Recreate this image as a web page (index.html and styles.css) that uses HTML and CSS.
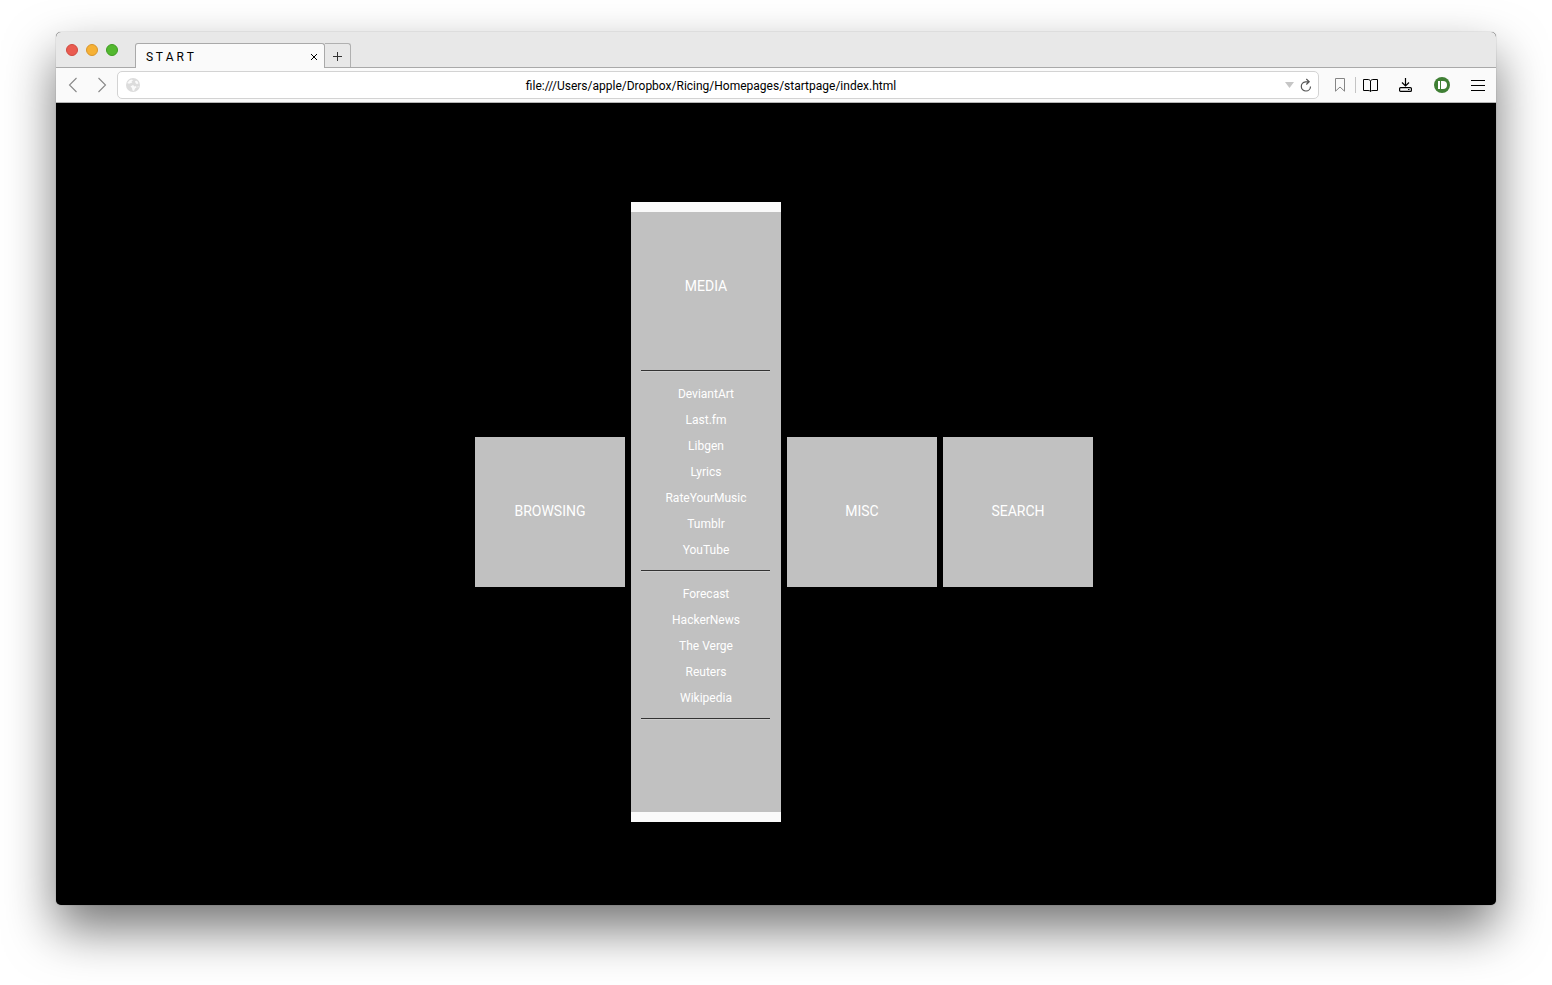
FILE: index.html
```html
<!DOCTYPE html>
<html lang="en">
<head>
<meta charset="utf-8">
<title>S T A R T</title>
<link rel="stylesheet" href="styles.css">
</head>
<body>
<div class="window">
  <header class="tabbar">
    <div class="lights">
      <button class="light red" aria-label="Close window"></button>
      <button class="light yellow" aria-label="Minimize window"></button>
      <button class="light green" aria-label="Zoom window"></button>
    </div>
    <div class="tab">
      <span>S T A R T</span>
      <button class="close" aria-label="Close tab"><svg width="8" height="8" viewBox="0 0 8 8"><path d="M1 1l6 6M7 1l-6 6" stroke="#000" stroke-width="1"/></svg></button>
    </div>
    <button class="newtab" aria-label="New tab"><svg width="9" height="9" viewBox="0 0 9 9"><path d="M4.500 0v9M0 4.500h9" stroke="#333"/></svg></button>
  </header>
  <nav class="toolbar">
    <div class="history">
      <button aria-label="Back"><svg width="10" height="16" viewBox="0 0 10 16" fill="none" stroke="#888" stroke-width="1.100"><path d="M8.500 1L1.500 8l7 7"/></svg></button>
      <button aria-label="Forward"><svg width="10" height="16" viewBox="0 0 10 16" fill="none" stroke="#888" stroke-width="1.100"><path d="M1.500 1l7 7-7 7"/></svg></button>
    </div>
    <div class="address">
      <svg width="14" height="14" viewBox="0 0 14 14"><circle cx="7" cy="7" r="7" fill="#dcdcdc"/><path d="M1.200 5L3.500 2.200 6 1.500l1 .8L5.500 3.500l.8 1-2 .8L3 5.800zM9 3l2-.2 1.500 2.400-1.500 1L9.500 5zM4.500 8.500L7 7l1.500 1.500 1.500-.5.500 1.500-1.500 1L8 13l-1.500-.5L6 10zM11.500 8.500l1.200-.5-.7 2z" fill="#fafafa"/></svg>
      <input class="url" type="text" aria-label="Address" value="file:///Users/apple/Dropbox/Ricing/Homepages/startpage/index.html">
      <button aria-label="Show history"><svg width="9" height="6" viewBox="0 0 9 6"><path d="M0 0h9L4.500 6z" fill="#c6c6c6"/></svg></button>
      <button class="reload" aria-label="Reload"><svg width="12" height="14" viewBox="0 0 12 14" fill="none" stroke="#555" stroke-width="1.200"><path d="M8.500 3.800H5.500a4.600 4.600 0 1 0 5 4.600M6.300 1l2.900 2.800-2.900 2.700"/></svg></button>
    </div>
    <div class="actions">
      <button class="bookmark" aria-label="Bookmark"><svg width="10" height="14" viewBox="0 0 10 14" fill="none" stroke="#858585"><path d="M.5.5h9v12.700L5 9 .5 13.200z"/></svg></button>
      <button class="reader" aria-label="Reader"><svg width="15" height="13" viewBox="0 0 15 13" fill="none" stroke="#000" stroke-width="1"><path d="M7.500 2C7 1 6 .5 5 .5H.5v11H5c1 0 2 .2 2.500 1 .5-.8 1.500-1 2.500-1h4.500V.5H10C9 .5 8 1 7.500 2zv10.500"/></svg></button>
      <button class="download" aria-label="Downloads"><svg width="13" height="14" viewBox="0 0 13 14" fill="none" stroke="#000" stroke-width="1.200"><path d="M6.500 0v7.500M3 4.500L6.500 8 10 4.500"/><rect x=".6" y="9.600" width="11.800" height="3.800" rx="1"/><path d="M9 11.500h1.500"/></svg></button>
      <button class="push" aria-label="Pushbullet"><svg width="16" height="16" viewBox="0 0 16 16"><circle cx="8" cy="8" r="8" fill="#3f7f34"/><path d="M4 4h2v8H4zM7 4h2a4 4 0 0 1 0 8H7z" fill="#fff"/></svg></button>
      <button class="menu" aria-label="Menu"><svg width="14" height="11" viewBox="0 0 14 11"><path d="M0 .5h14M0 5.500h14M0 10.500h14" stroke="#000"/></svg></button>
    </div>
  </nav>
  <main class="page">
    <section class="tile"><h2>BROWSING</h2></section>
    <section class="tile open">
      <h2>MEDIA</h2>
      <hr>
      <ul>
        <li><a href="#">DeviantArt</a></li>
        <li><a href="#">Last.fm</a></li>
        <li><a href="#">Libgen</a></li>
        <li><a href="#">Lyrics</a></li>
        <li><a href="#">RateYourMusic</a></li>
        <li><a href="#">Tumblr</a></li>
        <li><a href="#">YouTube</a></li>
      </ul>
      <hr>
      <ul>
        <li><a href="#">Forecast</a></li>
        <li><a href="#">HackerNews</a></li>
        <li><a href="#">The Verge</a></li>
        <li><a href="#">Reuters</a></li>
        <li><a href="#">Wikipedia</a></li>
      </ul>
      <hr>
    </section>
    <section class="tile"><h2>MISC</h2></section>
    <section class="tile"><h2>SEARCH</h2></section>
  </main>
</div>
</body>
</html>
```
FILE: styles.css
```css
* { box-sizing: border-box; }
body {
  margin: 0;
  min-height: 100vh;
  padding: 32px 56px 80px;
  display: flex;
  background: #fff;
  font: 12px/16px Roboto, sans-serif;
  color: #000;
}
button {
  border: 0;
  padding: 0;
  background: none;
  display: flex;
  align-items: center;
  justify-content: center;
}
svg { display: block; flex: none; }
.window {
  flex: 1;
  display: flex;
  flex-direction: column;
  border-radius: 5px;
  background: #000;
  box-shadow: 0 0 1px rgba(0, 0, 0, .5), 0 24px 50px rgba(0, 0, 0, .54);
}
.tabbar {
  height: 36px;
  display: flex;
  align-items: flex-end;
  background: #e8e8e8;
  border-bottom: 1px solid #a9a9a9;
  border-radius: 5px 5px 0 0;
}
.lights {
  display: flex;
  gap: 8px;
  padding: 0 17px 11px 10px;
}
.light {
  width: 12px;
  height: 12px;
  border-radius: 50%;
  border: 1px solid;
}
.red { background: #ea5b50; border-color: #d04a40; }
.yellow { background: #f6b135; border-color: #d9962a; }
.green { background: #53b82f; border-color: #3f9d22; }
.tab {
  width: 190px;
  height: 25px;
  margin-bottom: -1px;
  padding: 1px 6px 0 10px;
  display: flex;
  align-items: center;
  justify-content: space-between;
  background: #fafafa;
  border: 1px solid #a9a9a9;
  border-bottom: 0;
  border-radius: 3px 3px 0 0;
}
.newtab {
  width: 26px;
  height: 24px;
  padding-top: 2px;
  border: 1px solid #b0b0b0;
  border-left: 0;
  border-bottom: 0;
  border-radius: 0 3px 0 0;
}
.toolbar {
  height: 35px;
  display: flex;
  align-items: center;
  background: #fafafa;
  border-bottom: 1px solid #b5b5b5;
}
.history {
  display: flex;
  gap: 19px;
  padding: 0 10px 0 12px;
}
.address {
  flex: 1;
  height: 28px;
  display: flex;
  align-items: center;
  padding: 0 6px 0 8px;
  background: #fff;
  border: 1px solid #d3d3d3;
  border-radius: 5px;
}
.url {
  flex: 1;
  min-width: 0;
  height: 20px;
  padding: 2px 3px 0 0;
  border: 0;
  outline: 0;
  background: none;
  font: 12px/16px Roboto, sans-serif;
  color: #000;
  text-align: center;
}
.reload { margin-left: 6px; }
.actions {
  display: flex;
  align-items: center;
  padding: 0 11px 0 16px;
}
.bookmark { margin-right: 10px; }
.reader {
  height: 16px;
  border-left: 1px solid #c4c4c4;
  padding-left: 7px;
  margin-right: 21px;
}
.download { margin-right: 22px; }
.push { margin-right: 21px; }
.page {
  flex: 1;
  display: flex;
  align-items: center;
  justify-content: center;
  gap: 6px;
  padding: 16px 0 0 16px;
}
.tile {
  width: 150px;
  min-height: 150px;
  background: #c1c1c1;
  color: #fff;
  text-align: center;
}
.tile h2 {
  margin: 0;
  padding-bottom: 2px;
  font-size: 14px;
  font-weight: 400;
  line-height: 148px;
}
.open {
  min-height: 620px;
  border: solid #fafafa;
  border-width: 10px 0;
}
.open hr {
  height: 2px;
  margin: 8px 11px 9px 10px;
  border: 0;
  border-top: 1px solid #333;
  border-bottom: 1px solid #cecece;
}
.open ul {
  margin: 0;
  padding: 0;
  list-style: none;
  line-height: 26px;
}
.open ul + hr { margin-top: 7px; }
.open a { color: #fff; text-decoration: none; }
```
